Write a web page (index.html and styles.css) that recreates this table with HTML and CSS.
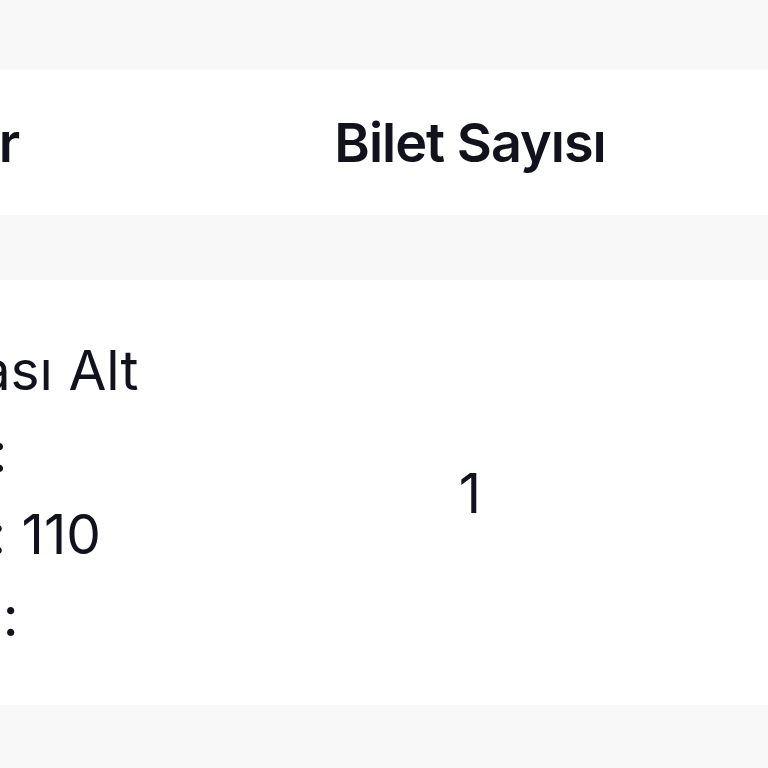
FILE: index.html
```html
<!DOCTYPE html>
<html lang="tr">
<head>
<meta charset="utf-8">
<link rel="stylesheet" href="styles.css">
</head>
<body>
<div class="page">
  <div class="table">
    <div class="row head">
      <div class="cell c1">Bilgiler</div>
      <div class="cell c2">Bilet Sayısı</div>
    </div>
    <div class="gap"></div>
    <div class="row body">
      <div class="cell c1">
        <div class="line">Arkası Alt</div>
        <div class="line">Kod:</div>
        <div class="line">Sıra: 110</div>
        <div class="line">Orta:</div>
      </div>
      <div class="cell c2">1</div>
    </div>
  </div>
</div>
</body>
</html>
```

FILE: styles.css
```css
html, body {
  margin: 0;
  padding: 0;
  background: #f8f8f8;
  overflow: hidden;
}
.page {
  width: 768px;
  height: 768px;
  overflow: hidden;
  padding-top: 70px;
  box-sizing: border-box;
}
.table {
  margin-left: -260px;
  width: 1300px;
  font-family: "Inter", "Noto Sans", sans-serif;
  color: #12121c;
}
.row {
  display: grid;
  grid-template-columns: 500px 460px 340px;
  background: #ffffff;
}
.head {
  height: 145px;
  font-size: 54px;
  font-weight: 600;
  letter-spacing: -1px;
  align-items: center;
}
.gap {
  height: 65px;
}
.body {
  height: 425px;
  font-size: 55px;
  font-weight: 400;
  align-items: center;
}
.cell.c1 {
  padding-left: 150px;
}
.head .c1 {
  padding-left: 108px;
}
.c2 {
  text-align: center;
}
.line {
  line-height: 82px;
  white-space: nowrap;
}
```
